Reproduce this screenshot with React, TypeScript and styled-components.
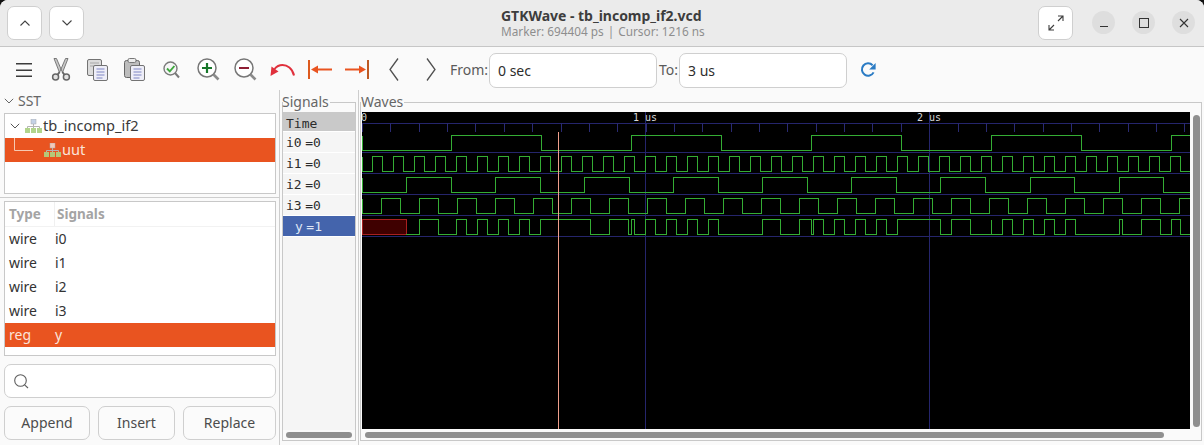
import React from "react";
import styled, { createGlobalStyle } from "styled-components";

const Global = createGlobalStyle`
  html, body { margin: 0; padding: 0; background: #111; }
  * { box-sizing: border-box; }
`;

const SANS = `"Noto Sans", "Open Sans", sans-serif`;
const MONO = `"DejaVu Sans Mono", "Liberation Mono", monospace`;
const ORANGE = "#e95420";

const Win = styled.div`
  width: 1204px; height: 445px; overflow: hidden;
  display: flex; flex-direction: column;
  background: #fafafa; border-radius: 8px 8px 0 0;
  font-family: ${SANS}; color: #3d3d3d;
`;
const Header = styled.header`
  height: 47px; flex: none; display: flex; align-items: center;
  background: #ebebeb; border-bottom: 1px solid #c6c6c6; padding: 0 9px 1px 7px;
`;
const HeaderSide = styled.div<{ $end?: boolean }>`
  flex: 1; display: flex; align-items: center;
  justify-content: ${(p) => (p.$end ? "flex-end" : "flex-start")};
`;
const HeadButton = styled.div<{ $gap?: number }>`
  width: 35px; height: 34px; display: flex; align-items: center; justify-content: center;
  background: #fff; border: 1px solid #cfcfcf; border-radius: 7px; margin-right: ${(p) => p.$gap ?? 0}px;
`;
const Titles = styled.div` display: flex; flex-direction: column; width: 200px; `;
const Title = styled.div`
  font-size: 14px; line-height: 17px; font-weight: 700; color: #3d3d3d; white-space: nowrap; letter-spacing: -0.02px;
`;
const Subtitle = styled.div`
  display: flex; gap: 4px; font-size: 11.8px; line-height: 15px; color: #8e8e8e; white-space: nowrap;
`;
const Round = styled.div<{ $gap?: number }>`
  width: 23px; height: 23px; border-radius: 50%; background: #dedede; margin-left: ${(p) => p.$gap ?? 17}px;
  display: flex; align-items: center; justify-content: center;
`;

const Toolbar = styled.div`
  height: 43px; flex: none; display: flex; align-items: center; padding: 0 0 0 5px; background: #fafafa;
`;
const Slot = styled.div<{ $ml?: number }>`
  width: 37px; height: 34px; flex: none; display: flex; align-items: center; justify-content: center; margin-top: 2px;
  margin-left: ${(p) => p.$ml ?? 0}px;
`;
const FieldLabel = styled.span<{ $w: number; $ml: number }>`
  width: ${(p) => p.$w}px; margin-left: ${(p) => p.$ml}px; flex: none; font-size: 14px; color: #5a5a5a; margin-top: 2px; white-space: nowrap;
`;
const Field = styled.div`
  width: 168px; height: 35px; flex: none; margin-top: 3px; background: #fff; border: 1px solid #cfcfcf; border-radius: 7px;
  padding-left: 8px; display: flex; align-items: center; font-size: 14px; color: #2d2d2d;
`;

const Main = styled.div` flex: 1; display: flex; min-height: 0; `;
const LeftPane = styled.div`
  width: 280px; flex: none; border-right: 1px solid #cdcdcd; display: flex; flex-direction: column;
`;
const SstHead = styled.div`
  height: 23px; flex: none; display: flex; align-items: center; gap: 4px; padding: 0 0 2px 4px; font-size: 14px; color: #666;
`;
const Box = styled.div<{ $h: number }>`
  height: ${(p) => p.$h}px; flex: none; margin: 0 3px 0 4px; border: 1px solid #c8c8c8; background: #fff;
`;
const TreeRow = styled.div<{ $active?: boolean; $indent: number }>`
  height: 24px; display: flex; align-items: center; padding-left: ${(p) => p.$indent}px;
  background: ${(p) => (p.$active ? ORANGE : "transparent")}; color: ${(p) => (p.$active ? "#fbe4da" : "#3a3a3a")};
  font-size: 14.6px; gap: 1px;
`;
const TreeLabel = styled.span` margin-top: -2px; `;
const Spacer = styled.span<{ $w: number }>` width: ${(p) => p.$w}px; flex: none; `;
const Divider = styled.div` height: 1px; flex: none; background: #cdcdcd; margin: 3px 0 3px; `;
const ListHead = styled.div`
  height: 25px; display: grid; grid-template-columns: 46px 1fr; align-items: center; padding-left: 4px;
  font-size: 13.5px; font-weight: 700; color: #a4a4a4; border-bottom: 1px solid #f2f2f2;
`;
const ListHeadCell = styled.span<{ $rule?: boolean; $pl?: number }>`
  height: 100%; display: flex; align-items: center; padding-left: ${(p) => p.$pl ?? 0}px;
  ${(p) => (p.$rule ? "border-right: 1px solid #f0f0f0;" : "")}
`;
const ListRow = styled.div<{ $active?: boolean }>`
  height: 24px; display: grid; grid-template-columns: 46px 1fr; align-items: center; padding: 0 0 1px 4px; font-size: 14px;
  background: ${(p) => (p.$active ? ORANGE : "transparent")}; color: ${(p) => (p.$active ? "#fbe4da" : "#333")};
`;
const Search = styled.div`
  height: 34px; flex: none; margin: 8px 3px 0 4px; background: #fff; border: 1px solid #cfcfcf; border-radius: 7px;
  display: flex; align-items: center; padding-left: 9px;
`;
const ButtonRow = styled.div` display: flex; gap: 8px; margin: 8px 3px 0 4px; `;
const Action = styled.div<{ $w: number }>`
  width: ${(p) => p.$w}px; height: 34px; display: flex; align-items: center; justify-content: center;
  background: #fbfbfb; border: 1px solid #cfcfcf; border-radius: 7px; font-size: 14px; color: #4c4c4c; padding-bottom: 1px;
`;

const Pane = styled.div<{ $w?: number; $rule?: boolean; $pl: number }>`
  ${(p) => (p.$w ? `width:${p.$w}px; flex:none;` : "flex:1; min-width:0;")}
  ${(p) => (p.$rule ? "border-right:1px solid #cdcdcd;" : "")}
  display: flex; flex-direction: column; padding: 6px 2px 4px ${(p) => p.$pl}px;
`;
const Caption = styled.div<{ $pl?: number }>`
  position: relative; z-index: 1;
  height: 12px; flex: none; display: flex; align-items: center; gap: 1px; font-size: 14px; color: #666; line-height: 12px;
  padding-left: ${(p) => p.$pl ?? 0}px;
  &::after { content: ""; flex: 1; height: 1px; background: #c8c8c8; }
`;
const FrameBody = styled.div`
  flex: 1; min-height: 0; display: flex; flex-direction: column; margin-top: -6px;
  border: 1px solid #c8c8c8; border-top: none;
`;
const SigList = styled.div`
  flex: 1; min-height: 0; margin-top: 10px; background: #f5f5f5; display: flex; flex-direction: column;
  font-family: ${MONO}; font-size: 13px; color: #2b2b2b;
`;
const SigTime = styled.div`
  height: 20px; flex: none; background: #c9c9c9; padding-left: 3px; line-height: 23px; border-bottom: 1px solid #fff; overflow: hidden;
`;
const SigRow = styled.div<{ $active?: boolean }>`
  height: 21px; flex: none; display: flex; align-items: center; gap: 3.5px; border-bottom: 1px solid #fff;
  padding-left: ${(p) => (p.$active ? 12 : 3)}px;
  background: ${(p) => (p.$active ? "#4464ac" : "#f5f5f5")};
  color: ${(p) => (p.$active ? "#dfe6f5" : "#2b2b2b")};
`;
const HGutter = styled.div<{ $pad: number; $pr: number }>`
  height: 10px; flex: none; padding: 2px ${(p) => p.$pr}px 2px ${(p) => p.$pad}px; background: #fafafa;
`;
const HThumb = styled.div` height: 6px; border-radius: 3px; background: #8f8f8f; `;
const WaveRow = styled.div` flex: 1; min-height: 0; display: flex; padding: 10px 0 0 1px; `;
const Canvas = styled.svg` width: 828px; height: 317px; flex: none; display: block; background: #000; `;
const VGutter = styled.div` flex: 1; padding: 3px 2px 3px 3px; `;
const VThumb = styled.div` width: 7px; height: 100%; border-radius: 3.5px; background: #8f8f8f; `;

/* ---- icons ---- */
const Chevron = ({ up, c = "#444" }: { up?: boolean; c?: string }) => (
  <svg width="12" height="8" viewBox="0 0 12 8" fill="none">
    <path d={up ? "M1.5 6.5 6 2l4.5 4.5" : "M1.5 1.5 6 6l4.5-4.5"} stroke={c} strokeWidth="1.1" />
  </svg>
);
const Small = ({ c = "#555" }: { c?: string }) => (
  <svg width="10" height="6" viewBox="0 0 10 6" fill="none"><path d="M.8.8 5 5 9.2.8" stroke={c} strokeWidth="1" /></svg>
);
const Expand = () => (
  <svg width="16" height="16" viewBox="0 0 16 16" fill="none" stroke="#3d3d3d" strokeWidth="1.1">
    <path d="M10 1h5v5M15 1 10 6M6 15H1v-5M1 15l5-5" />
  </svg>
);
const Hamburger = () => (
  <svg width="16" height="14" viewBox="0 0 16 14" stroke="#3b3b3b" strokeWidth="1.4"><path d="M0 .8h16M0 7.2h16M0 13.3h16" /></svg>
);
const Scissors = () => (
  <svg width="20" height="23" viewBox="0 0 20 23">
    <path d="M3 .5 5.5.5 10 11 8.5 14.5Z M17 .5 14.5.5 10 11 11.5 14.5Z" fill="#c9c9c9" stroke="#6d6d6d" strokeWidth=".9" />
    <path d="M8.6 14 6 17.5M11.4 14l2.6 3.5" stroke="#666" strokeWidth="2" />
    <circle cx="4.6" cy="19" r="3" fill="#e2e2e2" stroke="#666" strokeWidth="1.5" />
    <circle cx="15.4" cy="19" r="3" fill="#e2e2e2" stroke="#666" strokeWidth="1.5" />
  </svg>
);
const PageLines = ({ x, y }: { x: number; y: number }) => (
  <path d={`M${x} ${y}h8M${x} ${y + 3}h8M${x} ${y + 6}h8M${x} ${y + 9}h6`} stroke="#7f86c4" strokeWidth="1" />
);
const Copy = () => (
  <svg width="21" height="22" viewBox="0 0 21 22">
    <rect x=".5" y=".5" width="14" height="16" rx="1.5" fill="#dcdcdc" stroke="#737373" />
    <path d="M3 4h9M3 7h9" stroke="#a8a8a8" />
    <rect x="6.5" y="6.5" width="14" height="15" rx="1.5" fill="#eeeef8" stroke="#737373" />
    <PageLines x={9.5} y={10} />
  </svg>
);
const Paste = () => (
  <svg width="21" height="23" viewBox="0 0 21 23">
    <rect x=".5" y="2.5" width="15" height="17" rx="2" fill="#bdbdbd" stroke="#666" />
    <rect x="4" y=".5" width="8" height="4" rx="1.5" fill="#ececec" stroke="#777" />
    <rect x="6.5" y="7.5" width="14" height="15" rx="1.5" fill="#eeeef8" stroke="#737373" />
    <PageLines x={9.5} y={11} />
  </svg>
);
const Check = () => (
  <svg width="17" height="18" viewBox="0 0 17 18" fill="none">
    <circle cx="7.5" cy="7.5" r="6.5" fill="#f6f6f6" stroke="#7a7a7a" strokeWidth="1.4" />
    <path d="M12 12l4 4.5" stroke="#7a7a7a" strokeWidth="2" />
    <path d="M4 7.5 6.8 10.4 11.4 5" stroke="#3fa83f" strokeWidth="1.9" />
  </svg>
);
const Lens = ({ plus }: { plus?: boolean }) => (
  <svg width="23" height="23" viewBox="0 0 23 23" fill="none">
    <circle cx="10" cy="10" r="9" fill="#fff" stroke="#777" strokeWidth="1.5" />
    <path d="M16.5 16.5l5 5" stroke="#8a8a8a" strokeWidth="2.6" />
    {plus ? <path d="M5 10h10M10 5v10" stroke="#17772a" strokeWidth="2.2" /> : <path d="M5 10h10" stroke="#8e1e34" strokeWidth="2.2" />}
  </svg>
);
const Undo = () => (
  <svg width="25" height="14" viewBox="0 0 25 14" fill="none">
    <path d="M24 12.5C22.5 5 17 2 12.5 2 9 2 6.5 3.5 4.5 6" stroke="#e0303c" strokeWidth="2" />
    <path d="M0.5 13 1.5 3.5 8.5 8.5Z" fill="#e0303c" />
  </svg>
);
const ToStart = () => (
  <svg width="24" height="19" viewBox="0 0 24 19">
    <path d="M1 0v19" stroke="#dd5a1e" strokeWidth="2" />
    <path d="M8 9.5h16" stroke={ORANGE} strokeWidth="2" />
    <path d="M3 9.5 10 5.5v8Z" fill={ORANGE} />
  </svg>
);
const ToEnd = () => (
  <svg width="24" height="19" viewBox="0 0 24 19">
    <path d="M23 0v19" stroke="#bd5a24" strokeWidth="2" />
    <path d="M0 9.5h16" stroke={ORANGE} strokeWidth="2" />
    <path d="M21 9.5 14 5.5v8Z" fill={ORANGE} />
  </svg>
);
const Angle = ({ right }: { right?: boolean }) => (
  <svg width="10" height="23" viewBox="0 0 10 23" fill="none">
    <path d={right ? "M1 .5 9 11.5 1 22.5" : "M9 .5 1 11.5 9 22.5"} stroke="#505050" strokeWidth="1.3" />
  </svg>
);
const Reload = () => (
  <svg width="16" height="16" viewBox="0 0 16 16" fill="none">
    <path d="M13.6 10.4A6.2 6.2 0 1 1 12.6 3.2" stroke="#2a7bc4" strokeWidth="2" />
    <path d="M15.6 1v6.6H9.2Z" fill="#2a7bc4" />
  </svg>
);
const Magnifier = () => (
  <svg width="15" height="15" viewBox="0 0 15 15" fill="none" stroke="#5e5e5e" strokeWidth="1.1">
    <circle cx="6.5" cy="6.5" r="5.8" /><path d="M10.6 10.8 14 14" />
  </svg>
);
const Hier = ({ top, base }: { top: string; base: string }) => (
  <svg width="17" height="14" viewBox="0 0 17 14">
    <path d="M8.5 5v3M2.5 9V7.5h12V9M8.5 7.5V9" stroke="#b4b4b4" fill="none" />
    <rect x="6" y="0" width="5" height="5" fill={top} stroke="#a8a8a8" strokeWidth=".5" />
    <rect x="0" y="9" width="5" height="5" fill={base} />
    <rect x="6" y="9" width="5" height="5" fill={base} />
    <rect x="12" y="9" width="5" height="5" fill={base} />
  </svg>
);
const TreeElbow = () => (
  <svg width="20" height="24" viewBox="0 0 20 24" style={{ flex: "none" }}>
    <path d="M.5 0v12.5H19" stroke="#f6c9b2" fill="none" />
  </svg>
);

/* ---- wave data (canvas-relative pixels) ---- */
const OX = 362;
const W = 828;
const range = (start: number, step: number, end: number) => {
  const a: number[] = [];
  for (let x = start; x < end; x += step) a.push(x);
  return a;
};
const i1: number[] = [];
for (let k = 0; k < 40; k++) { i1.push(10 + 21 * k, 20 + 21 * k); }
const i3: number[] = [];
for (let k = 0; k < 22; k++) { i3.push(19 + 38 * k, 38 + 38 * k); }
const abs = (l: number[]) => l.map((x) => x - OX);
const yT = abs([419,438,456,466,477,487,498,508,519,529,540,590,609,628,631,634,645,655,666,676,687,697,708,718,762,780,799,811,813,823,834,844,855,865,876,886,897,940,951,970,991,991,1002,1012,1023,1033,1044,1054,1065,1075,1119,1122,1141,1160,1171,1180]);
const signals = [
  { name: "i0", value: "=0", toggles: range(89, 90, W), from: 0 },
  { name: "i1", value: "=0", toggles: i1, from: 0 },
  { name: "i2", value: "=0", toggles: abs([406,451,495,540,584,629,673,718,762,807,851,896,940,985,1030,1074,1119,1163]), from: 0 },
  { name: "i3", value: "=0", toggles: i3, from: 0 },
  { name: "y", value: "=1", toggles: yT, from: 44 },
];
const wavePath = (row: number, toggles: number[], from: number) => {
  const hi = 23.5 + 21 * row;
  const lo = 38.5 + 21 * row;
  let d = from === 0 ? `M0.5 ${hi}V${lo}` : `M${from} ${lo}`;
  let high = false;
  toggles.filter((t) => t < W).forEach((t) => {
    d += `H${t + 0.5}V${high ? lo : hi}`;
    high = !high;
  });
  return d + `H${W}`;
};
const GRID = "#25256c";
const ticks = range(0, 28.36, W);

const Waves = () => (
  <Canvas viewBox="0 0 828 317" shapeRendering="crispEdges">
    {[11, 40, 61, 82, 103, 124].map((y) => (
      <line key={y} x1="0" x2={W} y1={y + 0.5} y2={y + 0.5} stroke={GRID} />
    ))}
    {ticks.map((t) => (
      <line key={t} x1={Math.round(t) + 0.5} x2={Math.round(t) + 0.5} y1="11" y2="20" stroke="#2a2a72" />
    ))}
    <line x1="283.5" x2="283.5" y1="0" y2="317" stroke={GRID} />
    <line x1="567.5" x2="567.5" y1="0" y2="317" stroke={GRID} />
    <rect x="0.5" y="107.5" width="44" height="15" fill="#3f0000" stroke="#a82020" />
    {signals.map((s, i) => (
      <path key={s.name} d={wavePath(i, s.toggles, s.from)} fill="none" stroke="#34ad34" />
    ))}
    <line x1="196.5" x2="196.5" y1="20" y2="317" stroke="#ef9f8c" />
    <g fontFamily={MONO} fontSize="10" fill="#d6d6d6" shapeRendering="auto">
      <text x="-1" y="9">0</text>
      <text x="271" y="9">1 us</text>
      <text x="555" y="9">2 us</text>
    </g>
  </Canvas>
);

const files = [
  { t: "wire", n: "i0" }, { t: "wire", n: "i1" }, { t: "wire", n: "i2" }, { t: "wire", n: "i3" },
];

export default function App() {
  return (
    <Win>
      <Global />
      <Header>
        <HeaderSide>
          <HeadButton $gap={7}><Chevron up /></HeadButton>
          <HeadButton><Chevron /></HeadButton>
        </HeaderSide>
        <Titles>
          <Title>GTKWave - tb_incomp_if2.vcd</Title>
          <Subtitle><span>Marker: 694404 ps</span><span>|</span><span>Cursor: 1216 ns</span></Subtitle>
        </Titles>
        <HeaderSide $end>
          <HeadButton><Expand /></HeadButton>
          <Round $gap={19}><svg width="10" height="10" viewBox="0 0 10 10"><path d="M1 8.5h8" stroke="#333" strokeWidth="1.2" /></svg></Round>
          <Round><svg width="10" height="10" viewBox="0 0 10 10" fill="none"><rect x=".5" y=".5" width="9" height="9" stroke="#333" /></svg></Round>
          <Round><svg width="10" height="10" viewBox="0 0 10 10"><path d="M1 1l8 8M9 1 1 9" stroke="#333" strokeWidth="1.1" /></svg></Round>
        </HeaderSide>
      </Header>
      <Toolbar>
        <Slot><Hamburger /></Slot>
        <Slot><Scissors /></Slot>
        <Slot><Copy /></Slot>
        <Slot><Paste /></Slot>
        <Slot><Check /></Slot>
        <Slot><Lens plus /></Slot>
        <Slot><Lens /></Slot>
        <Slot><Undo /></Slot>
        <Slot><ToStart /></Slot>
        <Slot><ToEnd /></Slot>
        <Slot><Angle /></Slot>
        <Slot><Angle right /></Slot>
        <FieldLabel $w={39} $ml={1}>From:</FieldLabel>
        <Field>0 sec</Field>
        <FieldLabel $w={20} $ml={2}>To:</FieldLabel>
        <Field>3 us</Field>
        <Slot $ml={2}><Reload /></Slot>
      </Toolbar>
      <Main>
        <LeftPane>
          <SstHead><Small c="#666" />SST</SstHead>
          <Box $h={81}>
            <TreeRow $indent={5}><Small /><Spacer $w={3} /><Hier top="#c4d2e6" base="#b2d48c" /><TreeLabel>tb_incomp_if2</TreeLabel></TreeRow>
            <TreeRow $active $indent={9}><TreeElbow /><Spacer $w={8} /><Hier top="#f3c9b8" base="#b6c878" /><TreeLabel>uut</TreeLabel></TreeRow>
          </Box>
          <Divider />
          <Box $h={155}>
            <ListHead>
              <ListHeadCell $rule>Type</ListHeadCell>
              <ListHeadCell $pl={2}>Signals</ListHeadCell>
            </ListHead>
            {files.map((f) => (
              <ListRow key={f.n}><span>{f.t}</span><span>{f.n}</span></ListRow>
            ))}
            <ListRow $active><span>reg</span><span>y</span></ListRow>
          </Box>
          <Search><Magnifier /></Search>
          <ButtonRow>
            <Action $w={86}>Append</Action>
            <Action $w={77}>Insert</Action>
            <Action $w={93}>Replace</Action>
          </ButtonRow>
        </LeftPane>
        <Pane $w={79} $rule $pl={2}>
          <Caption>Signals</Caption>
          <FrameBody>
            <SigList>
              <SigTime>Time</SigTime>
              {signals.map((s) => (
                <SigRow key={s.name} $active={s.name === "y"}><span>{s.name}</span><span>{s.value}</span></SigRow>
              ))}
            </SigList>
            <HGutter $pad={3} $pr={3}><HThumb /></HGutter>
          </FrameBody>
        </Pane>
        <Pane $pl={1}>
          <Caption $pl={1}>Waves</Caption>
          <FrameBody>
            <WaveRow>
              <Waves />
              <VGutter><VThumb /></VGutter>
            </WaveRow>
            <HGutter $pad={4} $pr={37}><HThumb /></HGutter>
          </FrameBody>
        </Pane>
      </Main>
    </Win>
  );
}
